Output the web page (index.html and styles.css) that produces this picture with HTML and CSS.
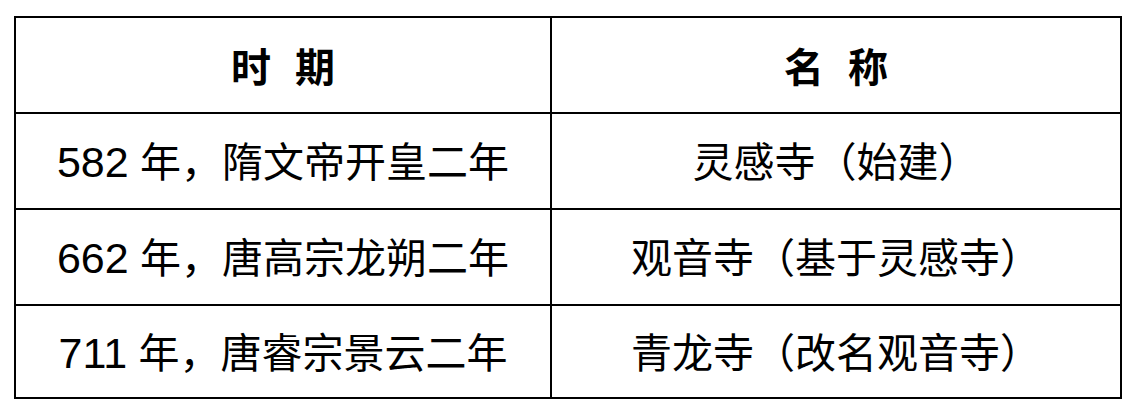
FILE: index.html
```html
<!DOCTYPE html>
<html lang="zh">
<head>
<meta charset="utf-8">
<link rel="stylesheet" href="styles.css">
</head>
<body>
<table class="history">
  <colgroup><col class="c1"><col class="c2"></colgroup>
  <thead>
    <tr class="head"><th>时 期</th><th>名 称</th></tr>
  </thead>
  <tbody>
    <tr class="r1"><td><span class="num">582</span> 年，隋文帝开皇二年</td><td>灵感寺（始建）</td></tr>
    <tr class="r2"><td><span class="num">662</span> 年，唐高宗龙朔二年</td><td>观音寺（基于灵感寺）</td></tr>
    <tr class="r3"><td><span class="num">711</span> 年，唐睿宗景云二年</td><td>青龙寺（改名观音寺）</td></tr>
  </tbody>
</table>
</body>
</html>
```

FILE: styles.css
```css
html, body {
  margin: 0;
  padding: 0;
  background: #fff;
}
.history {
  margin: 16px 0 0 14px;
  border-collapse: separate;
  border-spacing: 0;
  table-layout: fixed;
  width: 1108px;
  border-left: 2px solid #000;
  border-top: 2px solid #000;
  font-family: "Liberation Sans", "Noto Sans CJK SC", sans-serif;
  color: #000;
}
.c1 { width: 536px; }
.c2 { width: 570px; }
.history th,
.history td {
  border-right: 2px solid #000;
  border-bottom: 2px solid #000;
  text-align: center;
  vertical-align: middle;
  padding: 0;
  box-sizing: border-box;
}
.history th {
  height: 96px;
  font-size: 40px;
  font-weight: 700;
  word-spacing: 13px;
}
.history td {
  height: 96px;
  font-size: 41px;
  font-weight: 400;
  padding-bottom: 4px;
}
.num {
  font-size: 43px;
}
.history .r3 td { height: 93px; }
```
